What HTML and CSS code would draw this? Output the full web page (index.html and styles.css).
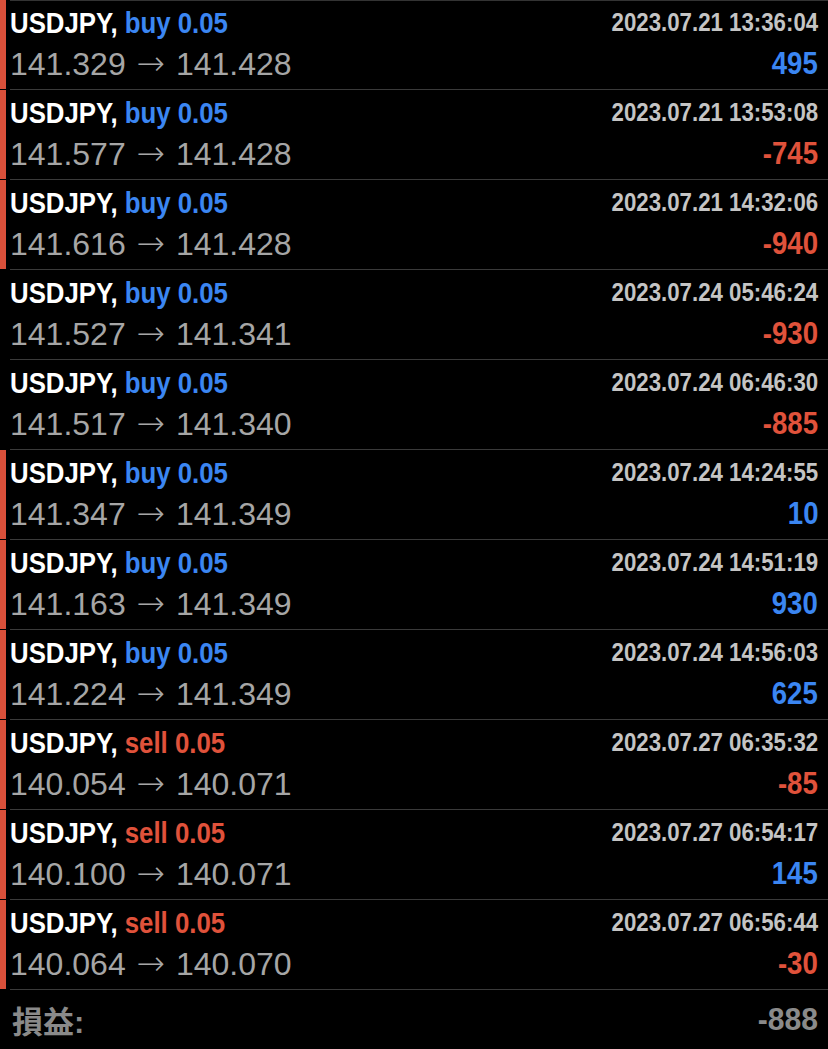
FILE: index.html
```html
<!DOCTYPE html>
<html lang="ja">
<head>
<meta charset="utf-8">
<link rel="stylesheet" href="styles.css">
</head>
<body>
<div class="list">
  <div class="row mark">
    <div class="bar"></div>
    <div class="content first">
      <div class="title"><span class="cond">USDJPY, <span class="buy">buy 0.05</span></span></div>
      <div class="date"><span class="cond">2023.07.21 13:36:04</span></div>
      <div class="price">141.329 <span class="arrow">→</span> 141.428</div>
      <div class="pl pos"><span class="cond">495</span></div>
    </div>
  </div>
  <div class="row mark">
    <div class="bar"></div>
    <div class="content">
      <div class="title"><span class="cond">USDJPY, <span class="buy">buy 0.05</span></span></div>
      <div class="date"><span class="cond">2023.07.21 13:53:08</span></div>
      <div class="price">141.577 <span class="arrow">→</span> 141.428</div>
      <div class="pl neg"><span class="cond">-745</span></div>
    </div>
  </div>
  <div class="row mark">
    <div class="bar"></div>
    <div class="content">
      <div class="title"><span class="cond">USDJPY, <span class="buy">buy 0.05</span></span></div>
      <div class="date"><span class="cond">2023.07.21 14:32:06</span></div>
      <div class="price">141.616 <span class="arrow">→</span> 141.428</div>
      <div class="pl neg"><span class="cond">-940</span></div>
    </div>
  </div>
  <div class="row">
    <div class="bar"></div>
    <div class="content">
      <div class="title"><span class="cond">USDJPY, <span class="buy">buy 0.05</span></span></div>
      <div class="date"><span class="cond">2023.07.24 05:46:24</span></div>
      <div class="price">141.527 <span class="arrow">→</span> 141.341</div>
      <div class="pl neg"><span class="cond">-930</span></div>
    </div>
  </div>
  <div class="row">
    <div class="bar"></div>
    <div class="content">
      <div class="title"><span class="cond">USDJPY, <span class="buy">buy 0.05</span></span></div>
      <div class="date"><span class="cond">2023.07.24 06:46:30</span></div>
      <div class="price">141.517 <span class="arrow">→</span> 141.340</div>
      <div class="pl neg"><span class="cond">-885</span></div>
    </div>
  </div>
  <div class="row mark">
    <div class="bar"></div>
    <div class="content">
      <div class="title"><span class="cond">USDJPY, <span class="buy">buy 0.05</span></span></div>
      <div class="date"><span class="cond">2023.07.24 14:24:55</span></div>
      <div class="price">141.347 <span class="arrow">→</span> 141.349</div>
      <div class="pl pos"><span class="cond">10</span></div>
    </div>
  </div>
  <div class="row mark">
    <div class="bar"></div>
    <div class="content">
      <div class="title"><span class="cond">USDJPY, <span class="buy">buy 0.05</span></span></div>
      <div class="date"><span class="cond">2023.07.24 14:51:19</span></div>
      <div class="price">141.163 <span class="arrow">→</span> 141.349</div>
      <div class="pl pos"><span class="cond">930</span></div>
    </div>
  </div>
  <div class="row mark">
    <div class="bar"></div>
    <div class="content">
      <div class="title"><span class="cond">USDJPY, <span class="buy">buy 0.05</span></span></div>
      <div class="date"><span class="cond">2023.07.24 14:56:03</span></div>
      <div class="price">141.224 <span class="arrow">→</span> 141.349</div>
      <div class="pl pos"><span class="cond">625</span></div>
    </div>
  </div>
  <div class="row mark">
    <div class="bar"></div>
    <div class="content">
      <div class="title"><span class="cond">USDJPY, <span class="sell">sell 0.05</span></span></div>
      <div class="date"><span class="cond">2023.07.27 06:35:32</span></div>
      <div class="price">140.054 <span class="arrow">→</span> 140.071</div>
      <div class="pl neg"><span class="cond">-85</span></div>
    </div>
  </div>
  <div class="row mark">
    <div class="bar"></div>
    <div class="content">
      <div class="title"><span class="cond">USDJPY, <span class="sell">sell 0.05</span></span></div>
      <div class="date"><span class="cond">2023.07.27 06:54:17</span></div>
      <div class="price">140.100 <span class="arrow">→</span> 140.071</div>
      <div class="pl pos"><span class="cond">145</span></div>
    </div>
  </div>
  <div class="row mark">
    <div class="bar"></div>
    <div class="content">
      <div class="title"><span class="cond">USDJPY, <span class="sell">sell 0.05</span></span></div>
      <div class="date"><span class="cond">2023.07.27 06:56:44</span></div>
      <div class="price">140.064 <span class="arrow">→</span> 140.070</div>
      <div class="pl neg"><span class="cond">-30</span></div>
    </div>
  </div>
</div>
<div class="footer">
  <div class="label">損益:</div>
  <div class="total"><span class="cond">-888</span></div>
</div>
</body>
</html>
```

FILE: styles.css
```css
html, body {
  margin: 0;
  padding: 0;
  background: #000;
}
body {
  width: 828px;
  height: 1049px;
  overflow: hidden;
  font-family: "Liberation Sans", Arial, sans-serif;
}
.list {
  display: flex;
  flex-direction: column;
}
.row {
  display: flex;
  height: 90px;
}
.bar {
  width: 6px;
  margin-bottom: 1px;
  flex: none;
}
.row.mark .bar {
  background: #d9503a;
}
.content {
  flex: 1;
  margin-left: 4px;
  padding-right: 10px;
  border-bottom: 1px solid #3a3a3a;
  display: grid;
  grid-template-columns: 1fr auto;
  grid-template-rows: 43px 46px;
}
.content.first {
  box-shadow: inset 0 1px 0 #333;
}
.cond {
  display: inline-block;
  white-space: nowrap;
}
.title {
  font-weight: 700;
  font-size: 30px;
  line-height: 40px;
  padding-top: 3px;
  color: #fff;
  white-space: nowrap;
}
.title .cond {
  transform: scaleX(0.86);
  transform-origin: left center;
}
.buy { color: #3b86f2; }
.sell { color: #e0523b; }
.date {
  font-weight: 700;
  font-size: 25px;
  line-height: 40px;
  padding-top: 2px;
  color: #c4c4c4;
  text-align: right;
  white-space: nowrap;
}
.date .cond,
.pl .cond {
  transform: scaleX(0.89);
  transform-origin: right center;
}
.total .cond {
  transform: scaleX(0.94);
  transform-origin: right center;
}
.price {
  font-size: 32px;
  line-height: 42px;
  color: #a6a6a6;
  white-space: nowrap;
}
.arrow {
  font-family: "DejaVu Sans", sans-serif;
  font-weight: 200;
  font-size: 34px;
  line-height: 1;
  margin: 0 2px;
}
.pl {
  font-weight: 700;
  font-size: 31px;
  line-height: 42px;
  text-align: right;
}
.pos { color: #3b86f2; }
.neg { color: #e0523b; }
.footer {
  display: flex;
  justify-content: space-between;
  align-items: center;
  height: 59px;
  padding: 0 10px 0 12px;
}
.label {
  font-family: "Liberation Sans", "Noto Sans CJK JP", sans-serif;
  font-weight: 700;
  font-size: 31px;
  color: #8a8a8a;
}
.total {
  font-weight: 700;
  font-size: 32px;
  color: #8a8a8a;
}
```
